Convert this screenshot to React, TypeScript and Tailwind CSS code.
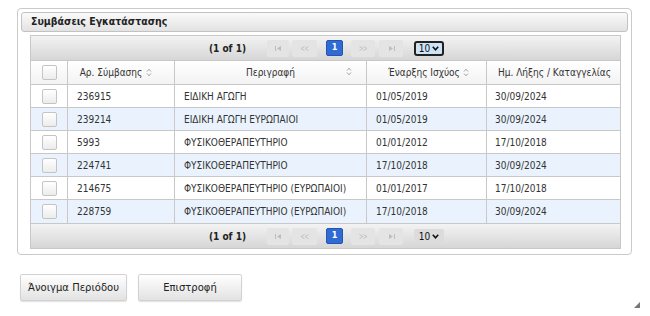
import React from "react";

const rows = [
  ["236915", "ΕΙΔΙΚΗ ΑΓΩΓΗ", "01/05/2019", "30/09/2024"],
  ["239214", "ΕΙΔΙΚΗ ΑΓΩΓΗ ΕΥΡΩΠΑΙΟΙ", "01/05/2019", "30/09/2024"],
  ["5993", "ΦΥΣΙΚΟΘΕΡΑΠΕΥΤΗΡΙΟ", "01/01/2012", "17/10/2018"],
  ["224741", "ΦΥΣΙΚΟΘΕΡΑΠΕΥΤΗΡΙΟ", "17/10/2018", "30/09/2024"],
  ["214675", "ΦΥΣΙΚΟΘΕΡΑΠΕΥΤΗΡΙΟ (ΕΥΡΩΠΑΙΟΙ)", "01/01/2017", "17/10/2018"],
  ["228759", "ΦΥΣΙΚΟΘΕΡΑΠΕΥΤΗΡΙΟ (ΕΥΡΩΠΑΙΟΙ)", "17/10/2018", "30/09/2024"],
];

function SortIcon() {
  return (
    <svg width="6" height="9" viewBox="0 0 6 9" className="inline-block shrink-0">
      <path d="M1 3.5 L3 1.2 L5 3.5" fill="none" stroke="#9a9a9a" strokeWidth="0.9" />
      <path d="M1 5.5 L3 7.8 L5 5.5" fill="none" stroke="#9a9a9a" strokeWidth="0.9" />
    </svg>
  );
}

function Check() {
  return (
    <div className="w-[15px] h-[15px] rounded-[2px] border border-[#c4c4c4] bg-gradient-to-b from-white to-[#ececec]" />
  );
}

function Glyph({ kind }: { kind: "first" | "prev" | "next" | "last" }) {
  const c = "#bdbdbd";
  return (
    <svg width="9" height="5" viewBox="0 0 9 5">
      {kind === "first" && (
        <>
          <rect x="1" y="0" width="1" height="5" fill={c} />
          <path d="M7 0 L3 2.5 L7 5 Z" fill={c} />
        </>
      )}
      {kind === "prev" && (
        <>
          <path d="M4.5 0.5 L1 2.5 L4.5 4.5" fill="none" stroke={c} strokeWidth="0.9" />
          <path d="M8.5 0.5 L5 2.5 L8.5 4.5" fill="none" stroke={c} strokeWidth="0.9" />
        </>
      )}
      {kind === "next" && (
        <>
          <path d="M0.5 0.5 L4 2.5 L0.5 4.5" fill="none" stroke={c} strokeWidth="0.9" />
          <path d="M4.5 0.5 L8 2.5 L4.5 4.5" fill="none" stroke={c} strokeWidth="0.9" />
        </>
      )}
      {kind === "last" && (
        <>
          <path d="M2 0 L6 2.5 L2 5 Z" fill={c} />
          <rect x="7" y="0" width="1" height="5" fill={c} />
        </>
      )}
    </svg>
  );
}

function NavBtn({ kind, w }: { kind: "first" | "prev" | "next" | "last"; w: string }) {
  return (
    <div className={`${w} h-[17px] rounded-[2px] bg-[#e4e4e4] flex items-center justify-center`}>
      <Glyph kind={kind} />
    </div>
  );
}

function Chevron() {
  return (
    <svg width="7" height="5" viewBox="0 0 7 5">
      <path d="M0.8 0.8 L3.5 3.8 L6.2 0.8" fill="none" stroke="#111" strokeWidth="1.6" />
    </svg>
  );
}

function Pager({ top }: { top: boolean }) {
  return (
    <div
      className={`h-[25px] flex items-center justify-center bg-gradient-to-b from-[#f3f3f3] to-[#d6d6d6] ${
        top ? "border-b border-[#c8c8c8]" : "border-t border-[#c8c8c8]"
      }`}
    >
      <span className="font-bold text-[10px] text-[#222] mr-[21px] ml-[2px]">(1 of 1)</span>
      <NavBtn kind="first" w="w-[22px]" />
      <div className="w-[3px]" />
      <NavBtn kind="prev" w="w-[25px]" />
      <div className="w-[9px]" />
      <div className="w-[17px] h-[16px] rounded-[2px] bg-[#2f6bd2] border border-[#2456b0] flex items-center justify-center text-white font-bold text-[9px]">
        1
      </div>
      <div className="w-[8px]" />
      <NavBtn kind="next" w="w-[24px]" />
      <div className="w-[4px]" />
      <NavBtn kind="last" w="w-[24px]" />
      <div className="w-[11px]" />
      {top ? (
        <div className="w-[30px] h-[15px] rounded-[3px] border-2 border-[#222] bg-[#cfe3f7] flex items-center justify-center gap-[2px] text-[10px] text-[#111]">
          <span>10</span>
          <Chevron />
        </div>
      ) : (
        <div className="w-[30px] h-[15px] rounded-[2px] bg-[#dcdcdc] flex items-center justify-center gap-[2px] text-[10px] text-[#111]">
          <span>10</span>
          <Chevron />
        </div>
      )}
    </div>
  );
}

export default function App() {
  const cols = "grid grid-cols-[37px_107px_192px_120px_135px]";
  return (
    <div className="w-[650px] h-[316px] bg-white relative overflow-hidden font-['DejaVu_Sans_Condensed','DejaVu_Sans',sans-serif] text-[#333]">
      <div className="ml-[17px] mt-[8px] w-[615px] h-[247px] border border-[#cacaca] rounded-[4px] px-[3px] pt-[3px]">
        <div className="h-[20px] rounded-[3px] border border-[#c2c2c2] bg-gradient-to-b from-[#fafafa] to-[#e2e2e2] flex items-center pl-[9px] text-[10.5px] font-bold text-[#222]">
          Συμβάσεις Εγκατάστασης
        </div>
        <div className="ml-[9px] mt-[3px] w-[591px] border border-[#c8c8c8]">
          <Pager top={true} />
          <div className={`${cols} h-[24px] bg-gradient-to-b from-white to-[#f3f3f3] border-b border-[#c8c8c8] text-[10px] text-[#333]`}>
            <div className="flex items-center justify-center border-r border-[#c8c8c8]">
              <Check />
            </div>
            <div className="flex items-center justify-center gap-[4px] border-r border-[#c8c8c8] pr-[10px]">
              <span>Αρ. Σύμβασης</span>
              <SortIcon />
            </div>
            <div className="relative flex items-center justify-center border-r border-[#c8c8c8]">
              <span>Περιγραφή</span>
              <span className="absolute right-[14px] top-[6px] flex">
                <SortIcon />
              </span>
            </div>
            <div className="flex items-center justify-center gap-[3px] border-r border-[#c8c8c8] pl-[4px]">
              <span>Έναρξης Ισχύος</span>
              <SortIcon />
            </div>
            <div className="flex items-center justify-center whitespace-nowrap overflow-hidden">
              <span>Ημ. Λήξης / Καταγγελίας</span>
            </div>
          </div>
          {rows.map((r, i) => (
            <div
              key={r[0]}
              className={`${cols} h-[23px] text-[10px] text-[#333] ${
                i % 2 === 1 ? "bg-[#eaf3fd]" : "bg-white"
              } ${i < rows.length - 1 ? "border-b border-[#c8c8c8]" : ""}`}
            >
              <div className="flex items-center justify-center border-r border-[#c8c8c8]">
                <Check />
              </div>
              <div className="flex items-center pl-[9px] border-r border-[#c8c8c8]">{r[0]}</div>
              <div className="flex items-center pl-[9px] border-r border-[#c8c8c8] whitespace-nowrap">{r[1]}</div>
              <div className="flex items-center pl-[9px] border-r border-[#c8c8c8]">{r[2]}</div>
              <div className="flex items-center pl-[8px]">{r[3]}</div>
            </div>
          ))}
          <Pager top={false} />
        </div>
      </div>
      <div className="flex gap-[11px] ml-[20px] mt-[19px] font-['DejaVu_Sans',sans-serif]">
        <button className="w-[107px] h-[27px] rounded-[2px] border border-[#d2d2d2] bg-gradient-to-b from-white to-[#e2e2e2] shadow-[0_1px_1px_rgba(0,0,0,0.12)] text-[10px] text-[#222]">
          Άνοιγμα Περιόδου
        </button>
        <button className="w-[104px] h-[27px] rounded-[2px] border border-[#d2d2d2] bg-gradient-to-b from-white to-[#e2e2e2] shadow-[0_1px_1px_rgba(0,0,0,0.12)] text-[10px] text-[#222]">
          Επιστροφή
        </button>
      </div>
      <svg className="absolute right-[10px] bottom-[8px]" width="6" height="6" viewBox="0 0 6 6">
        <path d="M6 0 L6 6 L0 6 Z" fill="#777" />
      </svg>
    </div>
  );
}
